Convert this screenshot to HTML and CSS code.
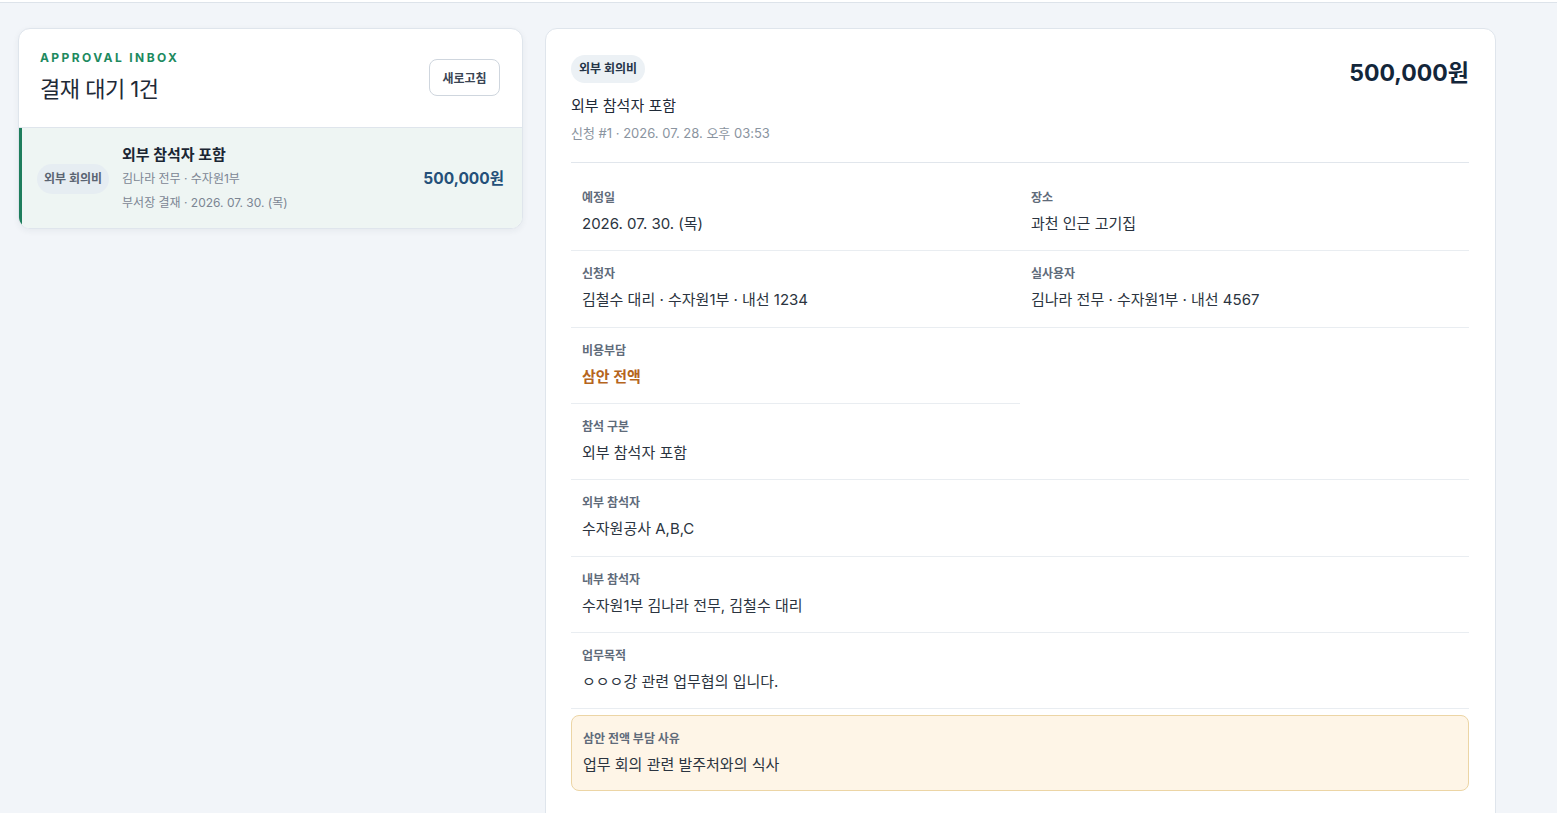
FILE: index.html
```html
<!DOCTYPE html>
<html lang="ko">
<head>
    <meta charset="UTF-8">
    <meta name="viewport" content="width=device-width, initial-scale=1.0">
    <title>결재함</title>
    <link rel="stylesheet" href="styles.css">
</head>
<body>
    <div class="topbar"></div>
    <div class="layout">
        <!-- 결재 대기 목록 -->
        <section class="inbox">
            <div class="inbox-head">
                <div>
                    <div class="eyebrow">APPROVAL INBOX</div>
                    <h1>결재 대기 1건</h1>
                </div>
                <button class="btn">새로고침</button>
            </div>
            <div class="inbox-item">
                <span class="chip">외부 회의비</span>
                <div class="item-text">
                    <div class="item-title">외부 참석자 포함</div>
                    <div class="item-sub">김나라 전무 · 수자원1부</div>
                    <div class="item-sub">부서장 결재 · 2026. 07. 30. (목)</div>
                </div>
                <div class="item-amount">500,000원</div>
            </div>
        </section>

        <!-- 상세 -->
        <section class="detail">
            <div class="detail-head">
                <div>
                    <span class="chip chip-dark">외부 회의비</span>
                    <div class="detail-title">외부 참석자 포함</div>
                    <div class="detail-meta">신청 #1 · 2026. 07. 28. 오후 03:53</div>
                </div>
                <div class="detail-amount">500,000원</div>
            </div>

            <div class="fields">
                <div class="field">
                    <div class="label">예정일</div>
                    <div class="value">2026. 07. 30. (목)</div>
                </div>
                <div class="field">
                    <div class="label">장소</div>
                    <div class="value">과천 인근 고기집</div>
                </div>
                <div class="field">
                    <div class="label">신청자</div>
                    <div class="value">김철수 대리 · 수자원1부 · 내선 1234</div>
                </div>
                <div class="field">
                    <div class="label">실사용자</div>
                    <div class="value">김나라 전무 · 수자원1부 · 내선 4567</div>
                </div>
                <div class="field">
                    <div class="label">비용부담</div>
                    <div class="value value-warn">삼안 전액</div>
                </div>
                <div class="field wide">
                    <div class="label">참석 구분</div>
                    <div class="value">외부 참석자 포함</div>
                </div>
                <div class="field wide">
                    <div class="label">외부 참석자</div>
                    <div class="value">수자원공사 A,B,C</div>
                </div>
                <div class="field wide">
                    <div class="label">내부 참석자</div>
                    <div class="value">수자원1부 김나라 전무, 김철수 대리</div>
                </div>
                <div class="field wide">
                    <div class="label">업무목적</div>
                    <div class="value">ㅇㅇㅇ강 관련 업무협의 입니다.</div>
                </div>
            </div>

            <div class="notice">
                <div class="label">삼안 전액 부담 사유</div>
                <div class="value notice-value">업무 회의 관련 발주처와의 식사</div>
            </div>
        </section>
    </div>
</body>
</html>
```

FILE: styles.css
```css
body {
    margin: 0;
    background-color: #f2f5f9;
    font-family: Inter, "Noto Sans CJK KR", sans-serif;
    color: #1f2a37;
}
.topbar {
    height: 2px;
    background-color: #fff;
    border-bottom: 1px solid #dde3ea;
}
.layout {
    display: grid;
    grid-template-columns: 505px 951px;
    gap: 22px;
    align-items: start;
    padding: 25px 0 0 18px;
}

/* 목록 카드 */
.inbox {
    background-color: #fff;
    border: 1px solid #dfe5ec;
    border-radius: 12px;
    box-shadow: 0 2px 6px rgba(30, 45, 60, 0.06);
    overflow: hidden;
}
.inbox-head {
    display: flex;
    justify-content: space-between;
    align-items: center;
    padding: 21px 22px 23px 21px;
    border-bottom: 1px solid #dfe5ec;
}
.eyebrow {
    font-size: 12px;
    font-weight: 700;
    letter-spacing: 2.4px;
    color: #1e8a5f;
    line-height: 16px;
}
h1 {
    margin: 8px 0 0;
    font-size: 22px;
    font-weight: 400;
    line-height: 30px;
    color: #1f2a37;
    letter-spacing: -0.5px;
}
.btn {
    font-family: inherit;
    font-size: 12px;
    font-weight: 700;
    color: #3a4553;
    background-color: #fff;
    border: 1px solid #cfd6de;
    border-radius: 8px;
    width: 71px;
    height: 37px;
    padding: 0;
    cursor: pointer;
}
.inbox-item {
    display: flex;
    align-items: center;
    gap: 13px;
    background-color: #eef5f3;
    border-left: 3px solid #1e7d5c;
    padding: 15px 18px 13px 15px;
}
.chip {
    display: inline-block;
    font-size: 12px;
    font-weight: 700;
    color: #5a6472;
    background-color: #e6edf2;
    border-radius: 15px;
    padding: 0 7px;
    line-height: 30px;
    white-space: nowrap;
}
.item-text {
    flex: 1;
}
.item-title {
    font-size: 15px;
    font-weight: 700;
    color: #1b2633;
    line-height: 24px;
}
.item-sub {
    font-size: 12px;
    color: #7c8693;
    line-height: 24px;
}
.item-amount {
    font-size: 15.5px;
    font-weight: 700;
    color: #245079;
    margin-bottom: 4px;
}

/* 상세 카드 */
.detail {
    background-color: #fff;
    border: 1px solid #dfe5ec;
    border-radius: 12px;
    padding: 26px 26px 40px 25px;
    min-height: 800px;
}
.detail-head {
    display: flex;
    justify-content: space-between;
    align-items: flex-start;
    padding-bottom: 19px;
    border-bottom: 1px solid #e1e6ec;
}
.chip-dark {
    color: #243447;
    background-color: #ecf1f5;
    border-radius: 14px;
    line-height: 28px;
    padding: 0 8px;
}
.detail-title {
    font-size: 15px;
    color: #1f2a37;
    line-height: 22px;
    margin-top: 12px;
}
.detail-meta {
    font-size: 13px;
    color: #8a94a0;
    line-height: 20px;
    margin-top: 6px;
}
.detail-amount {
    font-size: 23px;
    font-weight: 700;
    color: #13263a;
    margin-top: 1px;
    line-height: 34px;
}
.fields {
    display: grid;
    grid-template-columns: 1fr 1fr;
    margin-top: 12px;
}
.field {
    padding: 14px 11px 14.35px;
    border-bottom: 1px solid #e9edf1;
}
.field.wide {
    grid-column: 1 / -1;
}
.label {
    font-size: 12px;
    font-weight: 700;
    color: #5f6b7a;
    line-height: 18px;
}
.value {
    font-size: 15px;
    color: #2b3440;
    line-height: 24px;
    margin-top: 5px;
}
.value-warn {
    color: #b5651d;
    font-weight: 700;
}
.notice {
    margin-top: 6px;
    background-color: #fef5e7;
    border: 1px solid #ecd5a5;
    border-radius: 8px;
    padding: 14px 11px 13px;
}
.notice-value {
    font-size: 15px;
    margin-top: 5px;
    line-height: 24px;
}
```
